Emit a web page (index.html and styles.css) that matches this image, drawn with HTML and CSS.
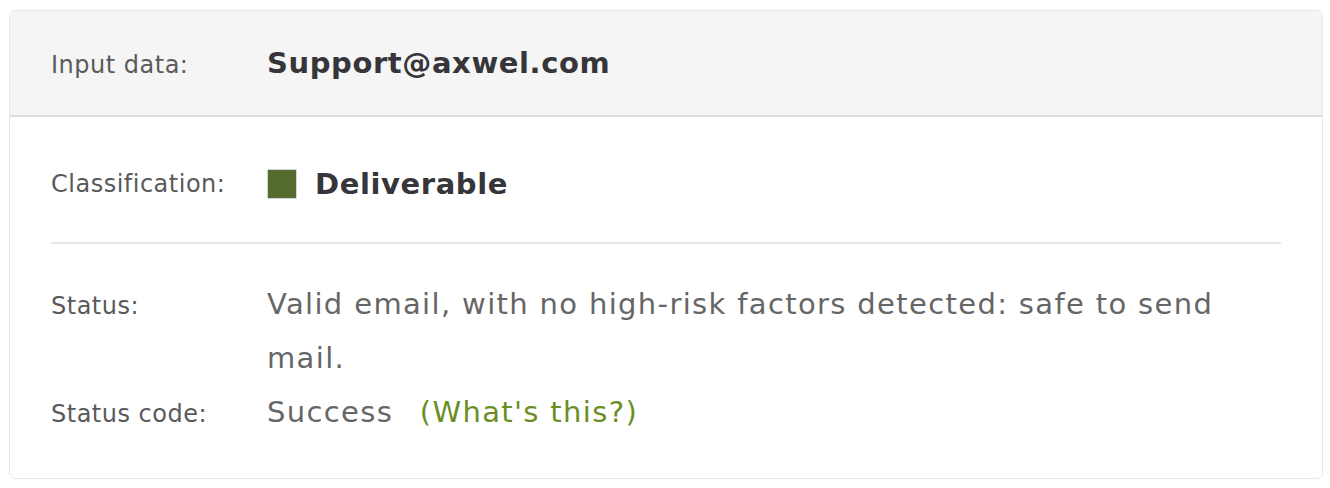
FILE: index.html
```html
<!DOCTYPE html>
<html lang="en">

<head>
    <meta charset="UTF-8">
    <meta name="viewport" content="width=device-width, initial-scale=1.0">
    <title>Email Verification Result</title>
    <link rel="stylesheet" href="styles.css">
</head>

<body>
    <div class="result-card">
        <div class="result-head">
            <div class="row">
                <span class="label">Input data:</span>
                <span class="value strong">Support@axwel.com</span>
            </div>
        </div>

        <div class="result-body">
            <div class="row classify">
                <span class="label">Classification:</span>
                <span class="value strong">
                    <span class="swatch"></span>
                    Deliverable
                </span>
            </div>

            <hr class="divider">

            <div class="row status">
                <span class="label">Status:</span>
                <span class="value">Valid email, with no high-risk factors detected: safe to send mail.</span>
            </div>
            <div class="row status">
                <span class="label">Status code:</span>
                <span class="value">Success <a href="#" class="help">(What's this?)</a></span>
            </div>
        </div>
    </div>
</body>

</html>
```

FILE: styles.css
```css
body {
    margin: 0;
    padding: 10px 7px 0 9px;
    font-family: 'DejaVu Sans', sans-serif;
    background-color: #fff;
}

.result-card {
    border: 1px solid #e8e8ec;
    border-radius: 6px;
    overflow: hidden;
    height: 469px;
    box-sizing: border-box;
}

.result-head {
    background-color: #f5f5f5;
    border-bottom: 2px solid #dedede;
    height: 104px;
    display: flex;
    align-items: center;
    padding: 0 41px;
}

.row {
    display: flex;
    align-items: baseline;
}

.label {
    width: 216px;
    flex-shrink: 0;
    font-size: 24px;
    letter-spacing: 0.5px;
    color: #5a5a5a;
}

.value {
    font-size: 29px;
    letter-spacing: 1.35px;
    color: #666;
    max-width: 980px;
}

.strong {
    font-weight: bold;
    letter-spacing: 0.6px;
    color: #35353a;
}

.result-body {
    padding: 50px 41px 0;
}

.classify {
    align-items: center;
}

.classify .value {
    display: flex;
    align-items: center;
    gap: 18px;
}

.swatch {
    width: 28px;
    height: 28px;
    background-color: #556b2f;
    border: 1px solid #d4d4d4;
}

.divider {
    border: none;
    border-top: 2px solid #e5e5e5;
    margin: 41px 0 33px;
}

.status .value {
    line-height: 54px;
}

.help {
    color: #6b8e23;
    text-decoration: none;
    margin-left: 16px;
}
```
